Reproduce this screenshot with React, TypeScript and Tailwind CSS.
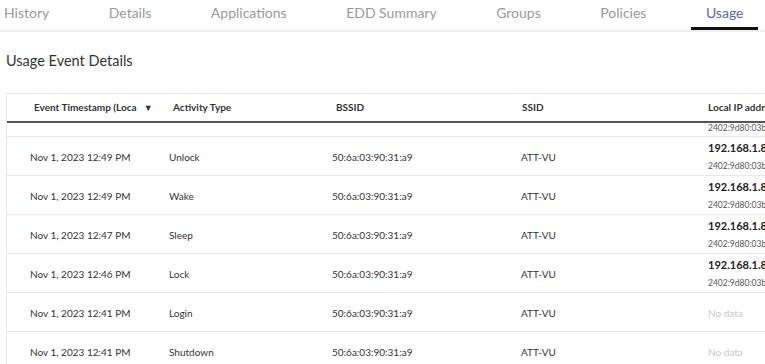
import React from 'react';

const tabs = ['History', 'Details', 'Applications', 'EDD Summary', 'Groups', 'Policies', 'Usage'];

interface UsageRow {
  time: string;
  activity: string;
  bssid: string;
  ssid: string;
  ip?: string;
  ipv6?: string;
}

const rows: UsageRow[] = [
  { time: 'Nov 1, 2023 12:49 PM', activity: 'Unlock', bssid: '50:6a:03:90:31:a9', ssid: 'ATT-VU', ip: '192.168.1.85', ipv6: '2402:9d80:03b8:1f2a' },
  { time: 'Nov 1, 2023 12:49 PM', activity: 'Wake', bssid: '50:6a:03:90:31:a9', ssid: 'ATT-VU', ip: '192.168.1.85', ipv6: '2402:9d80:03b8:1f2a' },
  { time: 'Nov 1, 2023 12:47 PM', activity: 'Sleep', bssid: '50:6a:03:90:31:a9', ssid: 'ATT-VU', ip: '192.168.1.85', ipv6: '2402:9d80:03b8:1f2a' },
  { time: 'Nov 1, 2023 12:46 PM', activity: 'Lock', bssid: '50:6a:03:90:31:a9', ssid: 'ATT-VU', ip: '192.168.1.85', ipv6: '2402:9d80:03b8:1f2a' },
  { time: 'Nov 1, 2023 12:41 PM', activity: 'Login', bssid: '50:6a:03:90:31:a9', ssid: 'ATT-VU' },
  { time: 'Nov 1, 2023 12:41 PM', activity: 'Shutdown', bssid: '50:6a:03:90:31:a9', ssid: 'ATT-VU' },
];

const cols = 'grid grid-cols-[162px_163px_189px_187px_200px]';

export default function App() {
  return (
    <div
      className="w-[765px] h-[364px] overflow-hidden bg-white text-[#333]"
      style={{ fontFamily: 'Lato, "Liberation Sans", sans-serif' }}
    >
      {/* Tabs */}
      <div className="flex border-b-2 border-[#f0f0f0] ml-[-11px] gap-[29.5px] h-[32px]">
        {tabs.map((t) => {
          const active = t === 'Usage';
          return (
            <div
              key={t}
              className={
                'px-[15px] h-[30px] flex items-center text-[14px] whitespace-nowrap border-b-[3px] ' +
                (active ? 'border-[#111] text-[#6264a7]' : 'border-transparent text-[#999]')
              }
            >
              <span className="mt-[-3px]">{t}</span>
            </div>
          );
        })}
      </div>

      {/* Title */}
      <div className="pl-[6px] pt-[18px] h-[61px] text-[14.5px] text-[#333]">Usage Event Details</div>

      {/* Table */}
      <div className="ml-[6px] border-l border-t border-[#e8e8e8]">
        <div className={cols + ' h-[29px] items-center border-b-2 border-[#555] text-[10px] font-bold text-[#333]'}>
          <div className="pl-[27px] flex items-center whitespace-nowrap">
            Event Timestamp (Loca
            <span className="ml-[7px] text-[9px]">▼</span>
          </div>
          <div className="pl-[4px]">Activity Type</div>
          <div className="pl-[4px]">BSSID</div>
          <div className="pl-[1px]">SSID</div>
          <div>Local IP address</div>
        </div>

        {/* partially scrolled row */}
        <div className={cols + ' h-[14px] border-b border-[#e8e8e8] overflow-hidden items-end'}>
          <div />
          <div />
          <div />
          <div />
          <div className="text-[8.5px] text-[#555] leading-[10px] mb-[3px] whitespace-nowrap">2402:9d80:03b8:1f2a</div>
        </div>

        {rows.map((r, i) => (
          <div key={i} className={cols + ' h-[39px] items-center border-b border-[#e8e8e8] text-[10px] text-[#333]'}>
            <div className="pl-[23px] pt-[3px] whitespace-nowrap">{r.time}</div>
            <div className="pt-[3px]">{r.activity}</div>
            <div className="pt-[3px]">{r.bssid}</div>
            <div className="pt-[3px]">{r.ssid}</div>
            <div className="whitespace-nowrap">
              {r.ip ? (
                <div className="flex flex-col">
                  <span className="text-[11px] font-bold text-[#222] leading-[14px]">{r.ip}</span>
                  <span className="text-[8.5px] text-[#555] leading-[11px] mt-[6px]">{r.ipv6}</span>
                </div>
              ) : (
                <span className="pt-[3px] block text-[#c8c8c8]">No data</span>
              )}
            </div>
          </div>
        ))}
      </div>
    </div>
  );
}
